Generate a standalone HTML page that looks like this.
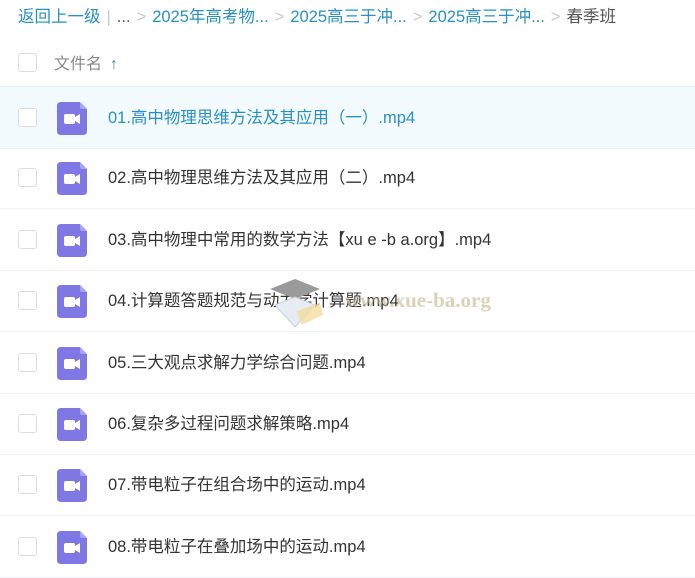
<!DOCTYPE html>
<html><head><meta charset="utf-8"><style>
body{margin:0;width:695px;height:572px;overflow:hidden;background:#fff;font-family:"Liberation Sans","Noto Sans CJK SC",sans-serif;position:relative}
.bc{position:absolute;top:6px;left:18px;font-size:16.5px;color:#2a8fc1;white-space:nowrap;line-height:22px}
.bc .g{color:#c9c9c9;margin:0 6px}
.bc .d{color:#555}
.cb{position:absolute;left:18px;width:17px;height:17px;border:1px solid #d9dde3;border-radius:3px;background:#fff}
.hdr{position:absolute;top:50px;left:54px;font-size:16px;color:#888}
.hdr b{color:#2a8fc1;margin-left:8px}
.row{position:absolute;left:0;width:695px;height:61px;border-bottom:1px solid #eef0f3}
.row .cb{top:21px}
.row .ic{position:absolute;left:57px;top:15px;width:30px;height:33px}
.row .t{position:absolute;left:108px;top:17px;font-size:16.5px;color:#333;white-space:nowrap}
.sel{background:#f2fafd;border-top:1px solid #e3eef4}
.sel .t{color:#2a8fc1}
.wm{position:absolute;left:345px;top:288px;font-family:"Liberation Serif",serif;font-weight:bold;font-size:21px;color:rgba(190,180,140,.6)}
</style></head><body>
<div class="bc">返回上一级<span class="g">|</span><span class="d">...</span><span class="g">&gt;</span>2025年高考物...<span class="g">&gt;</span>2025高三于冲...<span class="g">&gt;</span>2025高三于冲...<span class="g">&gt;</span><span class="d">春季班</span></div>
<div class="cb" style="top:53px"></div>
<div class="hdr">文件名<b>↑</b></div>
<div id="rows"></div>
<svg style="position:absolute;left:265px;top:275px" width="70" height="60"><polygon points="5,14 30,4 55,14 30,24" fill="#9a9a9a"/><polygon points="10,30 30,22 50,30 30,52" fill="#e6ecf2" stroke="#c3d3e0"/><polygon points="32,36 55,28 58,40 36,50" fill="#f3dca0" opacity=".8"/></svg>
<div class="wm">www.xue-ba.org</div>
<script>
var n=["01.高中物理思维方法及其应用（一）.mp4","02.高中物理思维方法及其应用（二）.mp4","03.高中物理中常用的数学方法【xu e -b a.org】.mp4","04.计算题答题规范与动力学计算题.mp4","05.三大观点求解力学综合问题.mp4","06.复杂多过程问题求解策略.mp4","07.带电粒子在组合场中的运动.mp4","08.带电粒子在叠加场中的运动.mp4"];
var h="";
var ic='<svg class="ic" viewBox="0 0 30 33"><path d="M4 0H23L30 7V29Q30 33 26 33H4Q0 33 0 29V4Q0 0 4 0Z" fill="#7f78e4"/><path d="M23 0L30 7H25Q23 7 23 5Z" fill="#a6a5f0"/><rect x="7" y="12" width="11" height="10" rx="2" fill="#fff"/><path d="M18 15L23 12V22L18 19Z" fill="#fff"/></svg>';
for(var i=0;i<8;i++){h+='<div class="row'+(i==0?' sel':'')+'" style="top:'+(86+i*61.4)+'px"><div class="cb"></div>'+ic+'<div class="t">'+n[i]+'</div></div>';}
document.getElementById("rows").innerHTML=h;
</script>
</body></html>
